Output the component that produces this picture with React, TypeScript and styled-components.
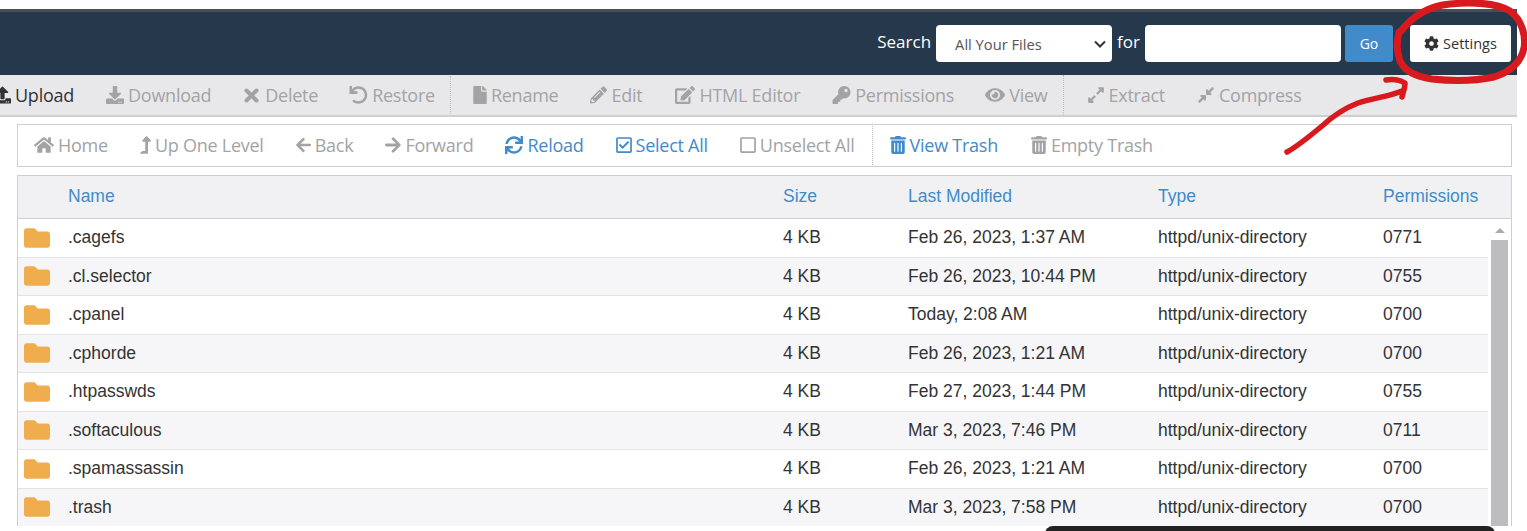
import { ReactNode } from 'react';
import styled, { createGlobalStyle } from 'styled-components';
import {
  FaArrowLeft,
  FaArrowRight,
  FaCog,
  FaCompressAlt,
  FaDownload,
  FaEdit,
  FaExpandAlt,
  FaEye,
  FaFile,
  FaFolder,
  FaHome,
  FaKey,
  FaLevelUpAlt,
  FaPencilAlt,
  FaRegCheckSquare,
  FaRegSquare,
  FaSync,
  FaTrashAlt,
  FaUndo,
  FaUpload,
} from 'react-icons/fa';

const GlobalStyle = createGlobalStyle`
  html, body {
    margin: 0;
    padding: 0;
    height: 531px;
    overflow: hidden;
    background: #fff;
  }
  * { box-sizing: border-box; }
`;

const Page = styled.div`
  position: relative;
  width: 1527px;
  height: 531px;
  overflow: hidden;
  padding-top: 9px;
  font-family: 'Open Sans', sans-serif;
`;

const TopBar = styled.header`
  width: 1517px;
  height: 66px;
  border-top: 3px solid #4b4f54;
  background: #26384c;
  display: flex;
  align-items: center;
  justify-content: flex-end;
  padding: 0 6px 1px 0;
`;

const SearchLabel = styled.label`
  color: #fff;
  font-size: 17px;
  margin-right: 5px;
  margin-top: -4px;
`;

const ForLabel = styled(SearchLabel)`
  margin-left: 5px;
`;

const ScopeSelect = styled.div`
  width: 176px;
  height: 37px;
  background: #fff;
  border-radius: 4px;
  display: flex;
  align-items: center;
  justify-content: space-between;
  padding: 2px 6px 0 19px;
  color: #555;
  font-size: 14.7px;
`;

const SearchInput = styled.input`
  width: 196px;
  height: 37px;
  border: none;
  border-radius: 4px;
  background: #fff;
`;

const GoButton = styled.button`
  width: 48px;
  height: 37px;
  margin-left: 4px;
  border: none;
  border-radius: 3px;
  background: #428bca;
  color: #fff;
  font-family: inherit;
  font-size: 14px;
`;

const SettingsButton = styled.button`
  width: 101px;
  height: 37px;
  margin-left: 17px;
  border: none;
  border-radius: 3px;
  background: #fff;
  color: #333;
  font-family: inherit;
  font-size: 14.5px;
  display: flex;
  align-items: center;
  justify-content: center;
  gap: 4px;

  svg {
    width: 15px;
    height: 15px;
  }
`;

const ActionBar = styled.div`
  width: 1523px;
  height: 42px;
  margin-left: -6px;
  margin-right: 10px;
  background: #e8e8ea;
  border-bottom: 2px solid #cfcfd1;
  display: flex;
  align-items: center;
`;

const NavBar = styled.div`
  width: 1495px;
  height: 43px;
  margin: 7px 0 8px 17px;
  padding: 0 0 2px 16px;
  background: #fff;
  border: 1px solid #cfcfd1;
  display: flex;
  align-items: center;
`;

const Tool = styled.span<{
  $tone: 'dark' | 'muted' | 'link';
  $gap: number;
  $iconWidth: number;
}>`
  display: inline-flex;
  align-items: center;
  gap: 4px;
  margin-right: ${p => p.$gap}px;
  font-size: 18px;
  letter-spacing: -0.25px;
  white-space: nowrap;
  color: ${p =>
    p.$tone === 'dark' ? '#333' : p.$tone === 'link' ? '#428bca' : '#a3a3a6'};

  svg {
    width: ${p => p.$iconWidth}px;
    height: 18px;
    flex: none;
  }
`;

const Divider = styled.span<{ $left: number; $right: number; $height: number }>`
  width: 0;
  height: ${p => p.$height}px;
  margin: 0 ${p => p.$right}px 0 ${p => p.$left}px;
  border-left: 1px dotted #bdbdc0;
`;

const TableBox = styled.div`
  position: relative;
  width: 1495px;
  height: 351px;
  margin-left: 17px;
  border: 1px solid #cfcfd1;
  border-bottom: none;
  font-family: 'Liberation Sans', Arial, sans-serif;
  font-size: 17.5px;
`;

const columns = '50px 715px 125px 250px 225px 1fr';

const HeadRow = styled.div`
  display: grid;
  grid-template-columns: ${columns};
  align-items: center;
  height: 43px;
  padding-bottom: 2px;
  background: #f1f1f3;
  border-bottom: 1px solid #cfcfd1;
  color: #428bca;
`;

const Body = styled.div`
  display: flex;
  justify-content: space-between;
  height: 307px;
  padding-right: 3px;
  overflow: hidden;
`;

const Rows = styled.div`
  width: 1470px;
`;

const Row = styled.div<{ $striped: boolean }>`
  display: grid;
  grid-template-columns: ${columns};
  align-items: center;
  height: 38.5px;
  border-bottom: 1px solid #e3e3e6;
  background: ${p => (p.$striped ? '#f6f6f8' : '#fff')};
  color: #333;

  svg {
    color: #f0ad4e;
    font-size: 26px;
    margin-left: 6px;
  }
`;

const ScrollTrack = styled.div`
  width: 17px;
  display: flex;
  flex-direction: column;
  align-items: center;
  background: #fff;
`;

const ScrollArrow = styled.div`
  width: 0;
  height: 0;
  margin: 9px 0 7px;
  border-left: 5px solid transparent;
  border-right: 5px solid transparent;
  border-bottom: 5px solid #a9a9ab;
`;

const ScrollThumb = styled.div`
  width: 17px;
  flex: 1;
  background: #bdbcbf;
`;

const DarkPopup = styled.div`
  position: absolute;
  left: 1045px;
  top: 526px;
  width: 450px;
  height: 20px;
  border-radius: 8px 8px 0 0;
  background: #222;
`;

const Scribble = styled.svg`
  position: absolute;
  left: 0;
  top: 0;
  pointer-events: none;
`;

const CrossIcon = () => (
  <svg viewBox="0 0 17 18">
    <path
      d="M2.5 4.5L12.5 14.5M12.5 4.5L2.5 14.5"
      fill="none"
      stroke="currentColor"
      strokeWidth="4"
      strokeLinecap="round"
    />
  </svg>
);

type ToolItem = {
  icon: ReactNode;
  label: string;
  tone: 'dark' | 'muted' | 'link';
  gap: number;
  width: number;
};

const actionsLeft: ToolItem[] = [
  { icon: <FaUpload />, label: 'Upload', tone: 'dark', gap: 32, width: 17 },
  { icon: <FaDownload />, label: 'Download', tone: 'muted', gap: 33, width: 18 },
  { icon: <CrossIcon />, label: 'Delete', tone: 'muted', gap: 31, width: 17 },
  { icon: <FaUndo />, label: 'Restore', tone: 'muted', gap: 0, width: 19 },
];

const actionsMiddle: ToolItem[] = [
  { icon: <FaFile />, label: 'Rename', tone: 'muted', gap: 32, width: 14 },
  { icon: <FaPencilAlt />, label: 'Edit', tone: 'muted', gap: 33, width: 17 },
  { icon: <FaEdit />, label: 'HTML Editor', tone: 'muted', gap: 32, width: 20 },
  { icon: <FaKey />, label: 'Permissions', tone: 'muted', gap: 31, width: 19 },
  { icon: <FaEye />, label: 'View', tone: 'muted', gap: 0, width: 20 },
];

const actionsRight: ToolItem[] = [
  { icon: <FaExpandAlt />, label: 'Extract', tone: 'muted', gap: 32, width: 18 },
  { icon: <FaCompressAlt />, label: 'Compress', tone: 'muted', gap: 0, width: 18 },
];

const navLeft: ToolItem[] = [
  { icon: <FaHome />, label: 'Home', tone: 'muted', gap: 32, width: 20 },
  { icon: <FaLevelUpAlt />, label: 'Up One Level', tone: 'muted', gap: 32, width: 11 },
  { icon: <FaArrowLeft />, label: 'Back', tone: 'muted', gap: 32, width: 15 },
  { icon: <FaArrowRight />, label: 'Forward', tone: 'muted', gap: 32, width: 16 },
  { icon: <FaSync />, label: 'Reload', tone: 'link', gap: 32, width: 18 },
  { icon: <FaRegCheckSquare />, label: 'Select All', tone: 'link', gap: 32, width: 16 },
  { icon: <FaRegSquare />, label: 'Unselect All', tone: 'muted', gap: 0, width: 16 },
];

const navRight: ToolItem[] = [
  { icon: <FaTrashAlt />, label: 'View Trash', tone: 'link', gap: 33, width: 16 },
  { icon: <FaTrashAlt />, label: 'Empty Trash', tone: 'muted', gap: 0, width: 16 },
];

const files = [
  ['.cagefs', 'Feb 26, 2023, 1:37 AM', '0771'],
  ['.cl.selector', 'Feb 26, 2023, 10:44 PM', '0755'],
  ['.cpanel', 'Today, 2:08 AM', '0700'],
  ['.cphorde', 'Feb 26, 2023, 1:21 AM', '0700'],
  ['.htpasswds', 'Feb 27, 2023, 1:44 PM', '0755'],
  ['.softaculous', 'Mar 3, 2023, 7:46 PM', '0711'],
  ['.spamassassin', 'Feb 26, 2023, 1:21 AM', '0700'],
  ['.trash', 'Mar 3, 2023, 7:58 PM', '0700'],
];

const renderTools = (items: ToolItem[]) =>
  items.map(item => (
    <Tool key={item.label} $tone={item.tone} $gap={item.gap} $iconWidth={item.width}>
      {item.icon}
      {item.label}
    </Tool>
  ));

const App = () => {
  return (
    <Page>
      <GlobalStyle />
      <TopBar>
        <SearchLabel>Search</SearchLabel>
        <ScopeSelect>
          All Your Files
          <svg width="12" height="8" viewBox="0 0 12 8">
            <path d="M1 1.5l5 5 5-5" fill="none" stroke="#333" strokeWidth="2" />
          </svg>
        </ScopeSelect>
        <ForLabel>for</ForLabel>
        <SearchInput />
        <GoButton>Go</GoButton>
        <SettingsButton>
          <FaCog />
          Settings
        </SettingsButton>
      </TopBar>
      <ActionBar>
        {renderTools(actionsLeft)}
        <Divider $left={15} $right={22} $height={38} />
        {renderTools(actionsMiddle)}
        <Divider $left={15} $right={23} $height={40} />
        {renderTools(actionsRight)}
      </ActionBar>
      <NavBar>
        {renderTools(navLeft)}
        <Divider $left={17} $right={17} $height={41} />
        {renderTools(navRight)}
      </NavBar>
      <TableBox>
        <HeadRow>
          <span />
          <span>Name</span>
          <span>Size</span>
          <span>Last Modified</span>
          <span>Type</span>
          <span>Permissions</span>
        </HeadRow>
        <Body>
          <Rows>
            {files.map(([name, modified, perms], index) => (
              <Row key={name} $striped={index % 2 === 1}>
                <FaFolder />
                <span>{name}</span>
                <span>4 KB</span>
                <span>{modified}</span>
                <span>httpd/unix-directory</span>
                <span>{perms}</span>
              </Row>
            ))}
          </Rows>
          <ScrollTrack>
            <ScrollArrow />
            <ScrollThumb />
          </ScrollTrack>
        </Body>
      </TableBox>
      <DarkPopup />
      <Scribble width="1527" height="531" viewBox="0 0 1527 531" fill="none">
        <path
          d="M1401 31C1412 17 1428 6 1450 4C1472 2 1497 3 1510 11C1522 20 1526 36 1524 48C1521 62 1510 72 1494 77C1475 81 1450 81 1432 79C1418 77 1405 72 1400 61C1396 51 1397 40 1399 32"
          stroke="#d81a1f"
          strokeWidth="7"
          strokeLinecap="round"
          strokeLinejoin="round"
        />
        <path
          d="M1287 152C1298 146 1310 136 1322 126C1334 115 1345 108 1358 103C1372 98 1388 97 1402 91M1386 80C1392 79 1400 80 1405 83C1405 88 1403 93 1402 97"
          stroke="#d81a1f"
          strokeWidth="5.5"
          strokeLinecap="round"
          strokeLinejoin="round"
        />
      </Scribble>
    </Page>
  );
};

export default App;
